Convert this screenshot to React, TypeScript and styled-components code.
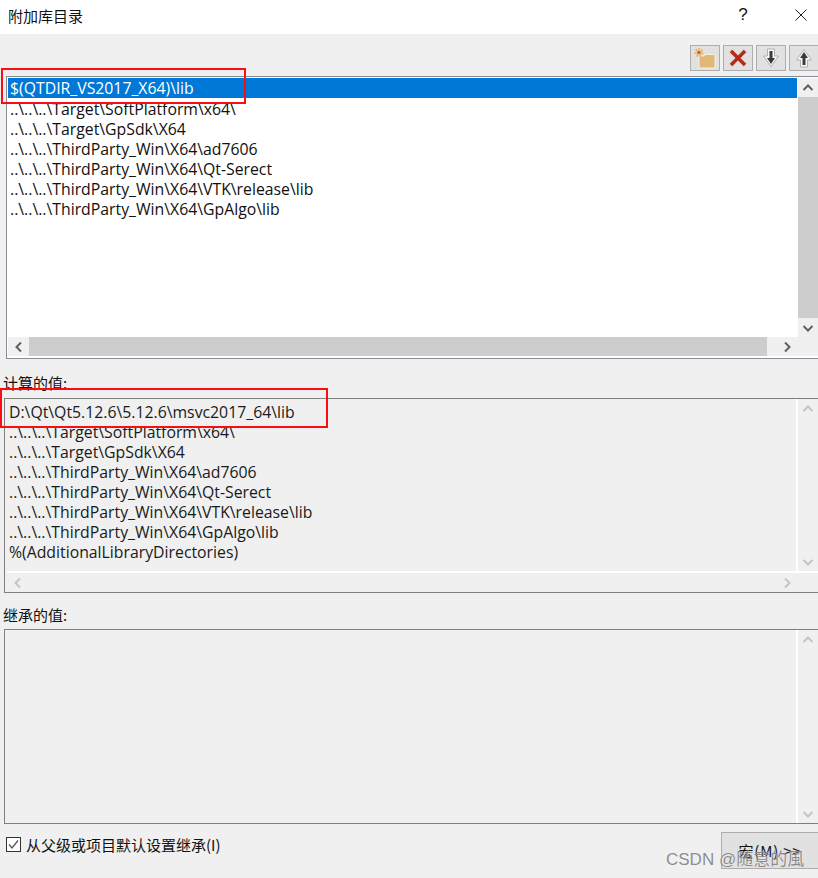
import React from "react";
import styled, { createGlobalStyle } from "styled-components";

const GlobalStyle = createGlobalStyle`
  html, body {
    margin: 0;
    padding: 0;
    background: #f0f0f0;
  }
`;

const Dialog = styled.div`
  position: relative;
  width: 818px;
  height: 878px;
  overflow: hidden;
  background: #f0f0f0;
  color: #111;
  font-family: "Open Sans", "Noto Sans CJK SC", sans-serif;
  font-size: 15.8px;
  display: flex;
  flex-direction: column;
`;

const TitleBar = styled.div`
  height: 34px;
  flex: none;
  box-sizing: border-box;
  padding: 0 0 4px 8px;
  background: #fff;
  display: flex;
  align-items: center;
  font-family: "Noto Sans CJK SC", sans-serif;
  font-size: 15px;
`;

const TitleText = styled.span`
  flex: 1;
`;

const HelpMark = styled.span`
  width: 16px;
  margin-right: 43px;
  text-align: center;
  font-family: "Liberation Sans", sans-serif;
  font-size: 17px;
`;

const CloseBox = styled.span`
  width: 14px;
  height: 14px;
  margin-right: 10px;
  display: flex;
`;

const Toolbar = styled.div`
  height: 26px;
  flex: none;
  margin-top: 11px;
  display: flex;
  justify-content: flex-end;
  gap: 3px;
  margin-right: -1px;
`;

const ToolButton = styled.div`
  width: 30px;
  height: 26px;
  box-sizing: border-box;
  border: 1px solid #adadad;
  background: #e1e1e1;
  display: flex;
  align-items: center;
  justify-content: center;
`;

const EditBox = styled.div`
  margin: 5px 0 0 6px;
  height: 283px;
  flex: none;
  box-sizing: border-box;
  border: 1px solid #8a8a96;
  border-right: none;
  background: #fff;
  padding: 1px 0 0 1px;
  display: grid;
  grid-template-columns: 1fr 20px;
  grid-template-rows: 259px 19px;
`;

const RowList = styled.div`
  min-width: 0;
  overflow: hidden;
`;

const Row = styled.div<{ $selected?: boolean }>`
  height: 20px;
  line-height: ${(p) => (p.$selected ? "20px" : "22px")};
  padding-left: 2px;
  white-space: nowrap;
  margin-right: 1px;
  background: ${(p) => (p.$selected ? "#0078d7" : "transparent")};
  color: ${(p) => (p.$selected ? "#fff" : "#111")};
`;

const VTrack = styled.div`
  background: #f0f0f0;
  display: flex;
  flex-direction: column;
  box-sizing: border-box;
`;

const HTrack = styled.div<{ $muted?: boolean }>`
  background: #f0f0f0;
  display: flex;
  align-items: stretch;
  border-top: ${(p) => (p.$muted ? "2px solid #fff" : "none")};
  box-sizing: border-box;
  grid-column: 1 / span 2;
`;

const ArrowCell = styled.div`
  flex: none;
  width: 20px;
  height: 19px;
  display: flex;
  align-items: center;
  justify-content: center;
`;

const HArrowCell = styled(ArrowCell)`
  width: 21px;
  height: auto;
`;

const VThumb = styled.div`
  flex: 1;
  background: #cdcdcd;
`;

const HThumb = styled.div`
  flex: 1;
  background: #cdcdcd;
`;

const HSpace = styled.div`
  flex: 1;
`;

const HThumbGap = styled.div`
  flex: none;
  width: 9px;
`;

const HEndGap = styled.div`
  flex: none;
  width: 21px;
`;

const FieldLabel = styled.div<{ $top: number }>`
  flex: none;
  margin: ${(p) => p.$top}px 0 0 3px;
  height: 20px;
  line-height: 20px;
  font-family: "Noto Sans CJK SC", sans-serif;
  font-size: 15px;
`;

const ReadBox = styled.div<{ $top: number }>`
  margin: ${(p) => p.$top}px 0 0 4px;
  height: 195px;
  flex: none;
  box-sizing: border-box;
  border: 1px solid #7f7f7f;
  border-right: none;
  background: #f0f0f0;
  padding-left: 2px;
  display: grid;
  grid-template-columns: 1fr 20px;
  grid-template-rows: 172px 21px;
`;

const TallReadBox = styled(ReadBox)`
  grid-template-rows: 1fr;
`;

const ReadRows = styled.div`
  border-right: 2px solid #fff;
  min-width: 0;
  overflow: hidden;
  padding-top: 3px;
`;

const ReadRow = styled.div`
  height: 20px;
  line-height: 20px;
  padding-left: 2px;
  white-space: nowrap;
  color: #1a1a1a;
`;

const BlankPane = styled.div`
  border-right: 2px solid #fff;
`;

const Footer = styled.div`
  flex: 1;
  display: flex;
  align-items: flex-start;
  justify-content: space-between;
  padding: 8px 0 0 6px;
`;

const CheckLine = styled.label`
  display: flex;
  align-items: center;
  gap: 5px;
  margin-top: 2px;
  font-family: "Noto Sans CJK SC", sans-serif;
  font-size: 15px;
`;

const CheckBox = styled.span`
  width: 15px;
  height: 15px;
  box-sizing: border-box;
  border: 1px solid #333;
  background: #fff;
  display: flex;
  align-items: center;
  justify-content: center;
`;

const MacroButton = styled.div`
  width: 97px;
  height: 37px;
  box-sizing: border-box;
  border: 1px solid #adadad;
  border-right: none;
  background: #e1e1e1;
  display: flex;
  align-items: center;
  justify-content: center;
  font-family: "Noto Sans CJK SC", sans-serif;
  font-size: 15px;
  letter-spacing: 0.8px;
`;

const Callout = styled.div<{ $left: number; $top: number; $w: number; $h: number }>`
  position: absolute;
  left: ${(p) => p.$left}px;
  top: ${(p) => p.$top}px;
  width: ${(p) => p.$w}px;
  height: ${(p) => p.$h}px;
  box-sizing: border-box;
  border: 2px solid #fb0d14;
  pointer-events: none;
`;

const Watermark = styled.div`
  position: absolute;
  left: 666px;
  top: 849px;
  font-family: "Liberation Sans", "Noto Sans CJK SC", sans-serif;
  font-size: 17px;
  line-height: 22px;
  white-space: nowrap;
  color: rgba(110, 110, 110, 0.8);
  text-shadow: 0 0 1px rgba(255, 255, 255, 0.8);
`;

type Dir = "up" | "down" | "left" | "right";

const chevrons: Record<Dir, string> = {
  up: "M1.5 8 L6 3.5 L10.5 8",
  down: "M1.5 4 L6 8.5 L10.5 4",
  left: "M8 1.5 L3.5 6 L8 10.5",
  right: "M4 1.5 L8.5 6 L4 10.5",
};

const Chevron: React.FC<{ dir: Dir; muted?: boolean }> = ({ dir, muted }) => (
  <svg width="12" height="12" viewBox="0 0 12 12">
    <path d={chevrons[dir]} fill="none" stroke={muted ? "#c4c4c4" : "#606060"} strokeWidth="2" />
  </svg>
);

const NewFolderIcon = () => (
  <svg width="24" height="22" viewBox="0 0 24 22">
    <path d="M6 9 H11 L12 7.500 H22 V21 H6 Z" fill="#e0b878" stroke="#f7efe0" strokeWidth="1" />
    <circle cx="6" cy="5.500" r="3.200" fill="none" stroke="#eeb26a" strokeWidth="2.600" strokeDasharray="1.800 1" />
    <circle cx="6" cy="5.500" r="1.800" fill="#b9711f" />
  </svg>
);

const DeleteIcon = () => (
  <svg width="24" height="22" viewBox="0 0 24 22">
    <path d="M4 3 L20 19 M20 3 L4 19" stroke="#dcdcdc" strokeWidth="6" />
    <path d="M5 4 L19 18 M19 4 L5 18" stroke="#b52a17" strokeWidth="3.400" />
  </svg>
);

const MoveIcon: React.FC<{ up?: boolean }> = ({ up }) => (
  <svg width="18" height="20" viewBox="0 0 18 20">
    <g transform={up ? "rotate(180 9 10)" : undefined}>
      <path d="M5.500 1 H12.500 V8 H16.500 L9 18.500 L1.500 8 H5.500 Z" fill="#fafafa" stroke="#b0b0b0" strokeWidth="1" />
      <path d="M7.500 3 H10.500 V10 H13 L9 16 L5 10 H7.500 Z" fill="#3a3a3a" />
    </g>
  </svg>
);

const topRows = [
  "..\\..\\..\\Target\\SoftPlatform\\x64\\",
  "..\\..\\..\\Target\\GpSdk\\X64",
  "..\\..\\..\\ThirdParty_Win\\X64\\ad7606",
  "..\\..\\..\\ThirdParty_Win\\X64\\Qt-Serect",
  "..\\..\\..\\ThirdParty_Win\\X64\\VTK\\release\\lib",
  "..\\..\\..\\ThirdParty_Win\\X64\\GpAlgo\\lib",
];

const App: React.FC = () => (
  <Dialog>
    <GlobalStyle />
    <TitleBar>
      <TitleText>附加库目录</TitleText>
      <HelpMark>?</HelpMark>
      <CloseBox>
        <svg width="14" height="14" viewBox="0 0 14 14">
          <path d="M1.500 1.500 L12.500 12.500 M12.500 1.500 L1.500 12.500" stroke="#222" strokeWidth="1" />
        </svg>
      </CloseBox>
    </TitleBar>

    <Toolbar>
      <ToolButton><NewFolderIcon /></ToolButton>
      <ToolButton><DeleteIcon /></ToolButton>
      <ToolButton><MoveIcon /></ToolButton>
      <ToolButton><MoveIcon up /></ToolButton>
    </Toolbar>

    <EditBox>
      <RowList>
        <Row $selected>$(QTDIR_VS2017_X64)\lib</Row>
        {topRows.map((row) => (
          <Row key={row}>{row}</Row>
        ))}
      </RowList>
      <VTrack>
        <ArrowCell><Chevron dir="up" /></ArrowCell>
        <VThumb />
        <ArrowCell><Chevron dir="down" /></ArrowCell>
      </VTrack>
      <HTrack>
        <HArrowCell><Chevron dir="left" /></HArrowCell>
        <HThumb />
        <HThumbGap />
        <HArrowCell><Chevron dir="right" /></HArrowCell>
        <HEndGap />
      </HTrack>
    </EditBox>

    <FieldLabel $top={14}>计算的值:</FieldLabel>
    <ReadBox $top={5}>
      <ReadRows>
        <ReadRow>D:\Qt\Qt5.12.6\5.12.6\msvc2017_64\lib</ReadRow>
        {topRows.map((row) => (
          <ReadRow key={row}>{row}</ReadRow>
        ))}
        <ReadRow>%(AdditionalLibraryDirectories)</ReadRow>
      </ReadRows>
      <VTrack>
        <ArrowCell><Chevron dir="up" muted /></ArrowCell>
        <HSpace />
        <ArrowCell><Chevron dir="down" muted /></ArrowCell>
      </VTrack>
      <HTrack $muted>
        <HArrowCell><Chevron dir="left" muted /></HArrowCell>
        <HSpace />
        <HArrowCell><Chevron dir="right" muted /></HArrowCell>
        <HEndGap />
      </HTrack>
    </ReadBox>

    <FieldLabel $top={12}>继承的值:</FieldLabel>
    <TallReadBox $top={4}>
      <BlankPane />
      <VTrack>
        <ArrowCell><Chevron dir="up" muted /></ArrowCell>
        <HSpace />
        <ArrowCell><Chevron dir="down" muted /></ArrowCell>
      </VTrack>
    </TallReadBox>

    <Footer>
      <CheckLine>
        <CheckBox>
          <svg width="13" height="13" viewBox="0 0 13 13">
            <path d="M2 6.500 L5 10 L11 2.500" fill="none" stroke="#555" strokeWidth="1.300" />
          </svg>
        </CheckBox>
        从父级或项目默认设置继承(I)
      </CheckLine>
      <MacroButton>宏(M) &gt;&gt;</MacroButton>
    </Footer>

    <Callout $left={1} $top={68} $w={245} $h={36} />
    <Callout $left={0} $top={388} $w={328} $h={40} />
    <Watermark>CSDN @随意的風</Watermark>
  </Dialog>
);

export default App;
